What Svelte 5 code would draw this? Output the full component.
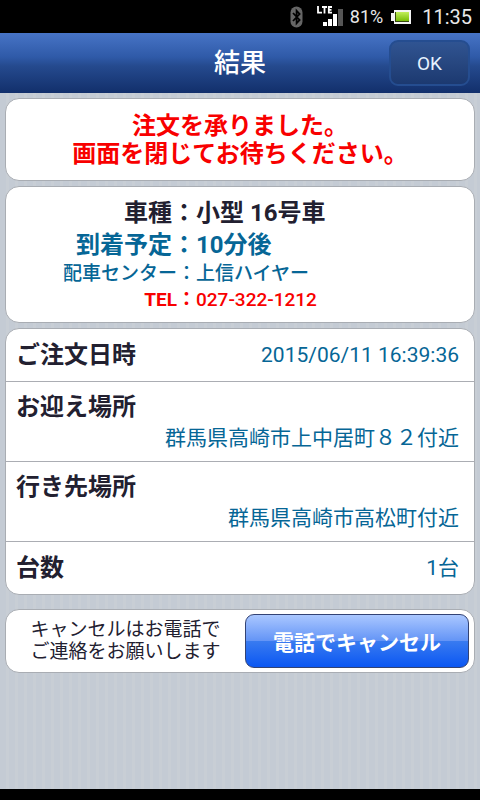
<!-- OrderResult.svelte – taxi order confirmation -->
<script lang="ts">
  type Detail = { label: string; value: string; wide?: boolean };

  const details: Detail[] = [
    { label: 'ご注文日時', value: '2015/06/11 16:39:36' },
    { label: 'お迎え場所', value: '群馬県高崎市上中居町８２付近', wide: true },
    { label: '行き先場所', value: '群馬県高崎市高松町付近', wide: true },
    { label: '台数', value: '1台' },
  ];
</script>

<div class="screen">
  <div class="status">
    <svg class="bluetooth" width="14" height="22" viewBox="0 0 14 22" aria-hidden="true">
      <rect x="0.5" y="0.5" width="12" height="21" rx="6" fill="#666" />
      <path d="M3 7 L9.6 14 L6.6 17.2 V4.8 L9.6 8 L3 15" fill="none" stroke="#000" stroke-width="1.8" />
    </svg>
    <svg class="signal" width="28" height="22" viewBox="0 0 28 22" aria-hidden="true">
      <path d="M2 0 V6.6 H6 M6 1 H11 M8.5 1 V7.5 M16 1 H12.8 V6.6 H16 M12.8 3.8 H15.5" fill="none" stroke="#fff" stroke-width="1.8" />
      <rect x="7" y="16" width="4" height="4" fill="#fff" />
      <rect x="12" y="13" width="4" height="7" fill="#fff" />
      <rect x="17" y="8" width="4" height="12" fill="#fff" />
      <rect x="22" y="3" width="5" height="17" fill="#555" />
    </svg>
    <span class="percent">81%</span>
    <svg class="battery" width="20" height="14" viewBox="0 0 20 14" aria-hidden="true">
      <defs>
        <linearGradient id="charge" x1="0" y1="0" x2="0" y2="1">
          <stop offset="0" stop-color="#c2ee5c" />
          <stop offset="1" stop-color="#78bd08" />
        </linearGradient>
      </defs>
      <path d="M3 0 H20 V14 H3 V11 H0 V3 H3 Z" fill="#f4f4f4" />
      <rect x="4" y="2" width="14" height="10" fill="#35480e" />
      <rect x="5" y="2" width="13" height="9" fill="url(#charge)" />
    </svg>
    <span class="clock">11:35</span>
  </div>

  <header class="bar">
    <h1>結果</h1>
    <button class="ok-btn">OK</button>
  </header>

  <main>
    <p class="card notice">注文を承りました。<br />画面を閉じてお待ちください。</p>

    <dl class="card car">
      <div class="car-row">
        <dt>車種：</dt>
        <dd>小型 16号車</dd>
      </div>
      <div class="car-row blue">
        <dt>到着予定：</dt>
        <dd>10分後</dd>
      </div>
      <div class="car-row small blue">
        <dt>配車センター：</dt>
        <dd>上信ハイヤー</dd>
      </div>
      <div class="car-row small tel">
        <dt>TEL：</dt>
        <dd><a href="tel:027-322-1212">027-322-1212</a></dd>
      </div>
    </dl>

    <dl class="card details">
      {#each details as d (d.label)}
        <div class="detail" class:wide={d.wide}>
          <dt>{d.label}</dt>
          <dd>{d.value}</dd>
        </div>
      {/each}
    </dl>

    <section class="card cancel">
      <p>キャンセルはお電話で<br />ご連絡をお願いします</p>
      <button class="cancel-btn">電話でキャンセル</button>
    </section>
  </main>

  <div class="nav-edge"></div>
</div>

<style>
  :global(body) {
    margin: 0;
    background: #000;
  }

  .screen {
    display: flex;
    flex-direction: column;
    min-height: 100vh;
    font-family: Roboto, 'Noto Sans CJK JP', sans-serif;
    color: #222030;
  }

  .status {
    display: flex;
    align-items: center;
    justify-content: flex-end;
    height: 33px;
    padding-right: 8px;
    background: #000;
    color: #e8e8e8;
  }

  .signal {
    margin: 0 6px 0 12px;
  }

  .percent {
    font-size: 18px;
  }

  .battery {
    margin: 0 11px 0 8px;
  }

  .clock {
    font-size: 20px;
  }

  .bar {
    display: grid;
    grid-template-columns: 1fr auto 1fr;
    align-items: center;
    height: 60px;
    padding: 0 10px;
    background: linear-gradient(#4774c6, #2f5aa8 40%, #254a8e 55%, #122f6b);
  }

  .bar h1 {
    grid-column: 2;
    margin: 0;
    font-size: 26px;
    font-weight: 500;
    line-height: 36px;
    color: #fff;
  }

  .ok-btn {
    justify-self: end;
    width: 81px;
    height: 46px;
    border: 2px solid #254d90;
    border-radius: 9px;
    background: linear-gradient(#305492, #274780 50%, #1c3970);
    color: #e6f2ff;
    font: 400 19px Roboto, sans-serif;
    cursor: pointer;
  }

  main {
    flex: 1;
    display: flex;
    flex-direction: column;
    gap: 5px;
    padding: 5px;
    background: repeating-linear-gradient(90deg, #c4cbd4 0 6px, #c8ced5 6px 9px);
  }

  .card {
    margin: 0;
    border: 1px solid #a9adb3;
    border-radius: 14px;
    background: #fff;
  }

  dt,
  dd,
  p {
    margin: 0;
  }

  .notice {
    padding: 13px 0 12px;
    text-align: center;
    font-size: 24px;
    font-weight: 700;
    line-height: 28px;
    color: #f80000;
  }

  .car {
    padding: 10px 0 9px;
    font-size: 24px;
    font-weight: 700;
    line-height: 32px;
  }

  .car-row {
    display: grid;
    grid-template-columns: 190px 1fr;
  }

  .car-row dt {
    text-align: right;
  }

  .small {
    font-size: 19px;
    font-weight: 500;
    line-height: 26px;
  }

  .blue {
    color: #066696;
  }

  .tel {
    color: #f80000;
    font-weight: 700;
  }

  .tel a {
    color: inherit;
    font-weight: 500;
    text-decoration: none;
  }

  .details {
    margin-bottom: 9px;
  }

  .detail {
    display: flex;
    flex-wrap: wrap;
    align-items: center;
    justify-content: space-between;
    padding: 10px 15px 10px 10px;
    line-height: 32px;
  }

  .detail + .detail {
    border-top: 1px solid #abadb3;
  }

  .detail dt {
    font-size: 24px;
    font-weight: 700;
  }

  .detail dd {
    font-size: 21px;
    color: #066696;
  }

  .wide {
    padding-bottom: 7px;
    line-height: 31px;
  }

  .wide dt,
  .wide dd {
    width: 100%;
  }

  .wide dd {
    text-align: right;
  }

  .cancel {
    display: flex;
    align-items: center;
    padding: 4px 5px 4px 0;
  }

  .cancel p {
    flex: 1;
    text-align: center;
    font-size: 19px;
    line-height: 22px;
  }

  .cancel-btn {
    width: 224px;
    height: 54px;
    border: 1px solid #334374;
    border-radius: 9px;
    background: linear-gradient(#aac7ff, #6394f6 50%, #397bf0 50%, #0b57f3);
    color: #fff;
    font: 700 21px 'Noto Sans CJK JP', sans-serif;
    cursor: pointer;
  }

  .nav-edge {
    height: 11px;
    background: #000;
  }
</style>
